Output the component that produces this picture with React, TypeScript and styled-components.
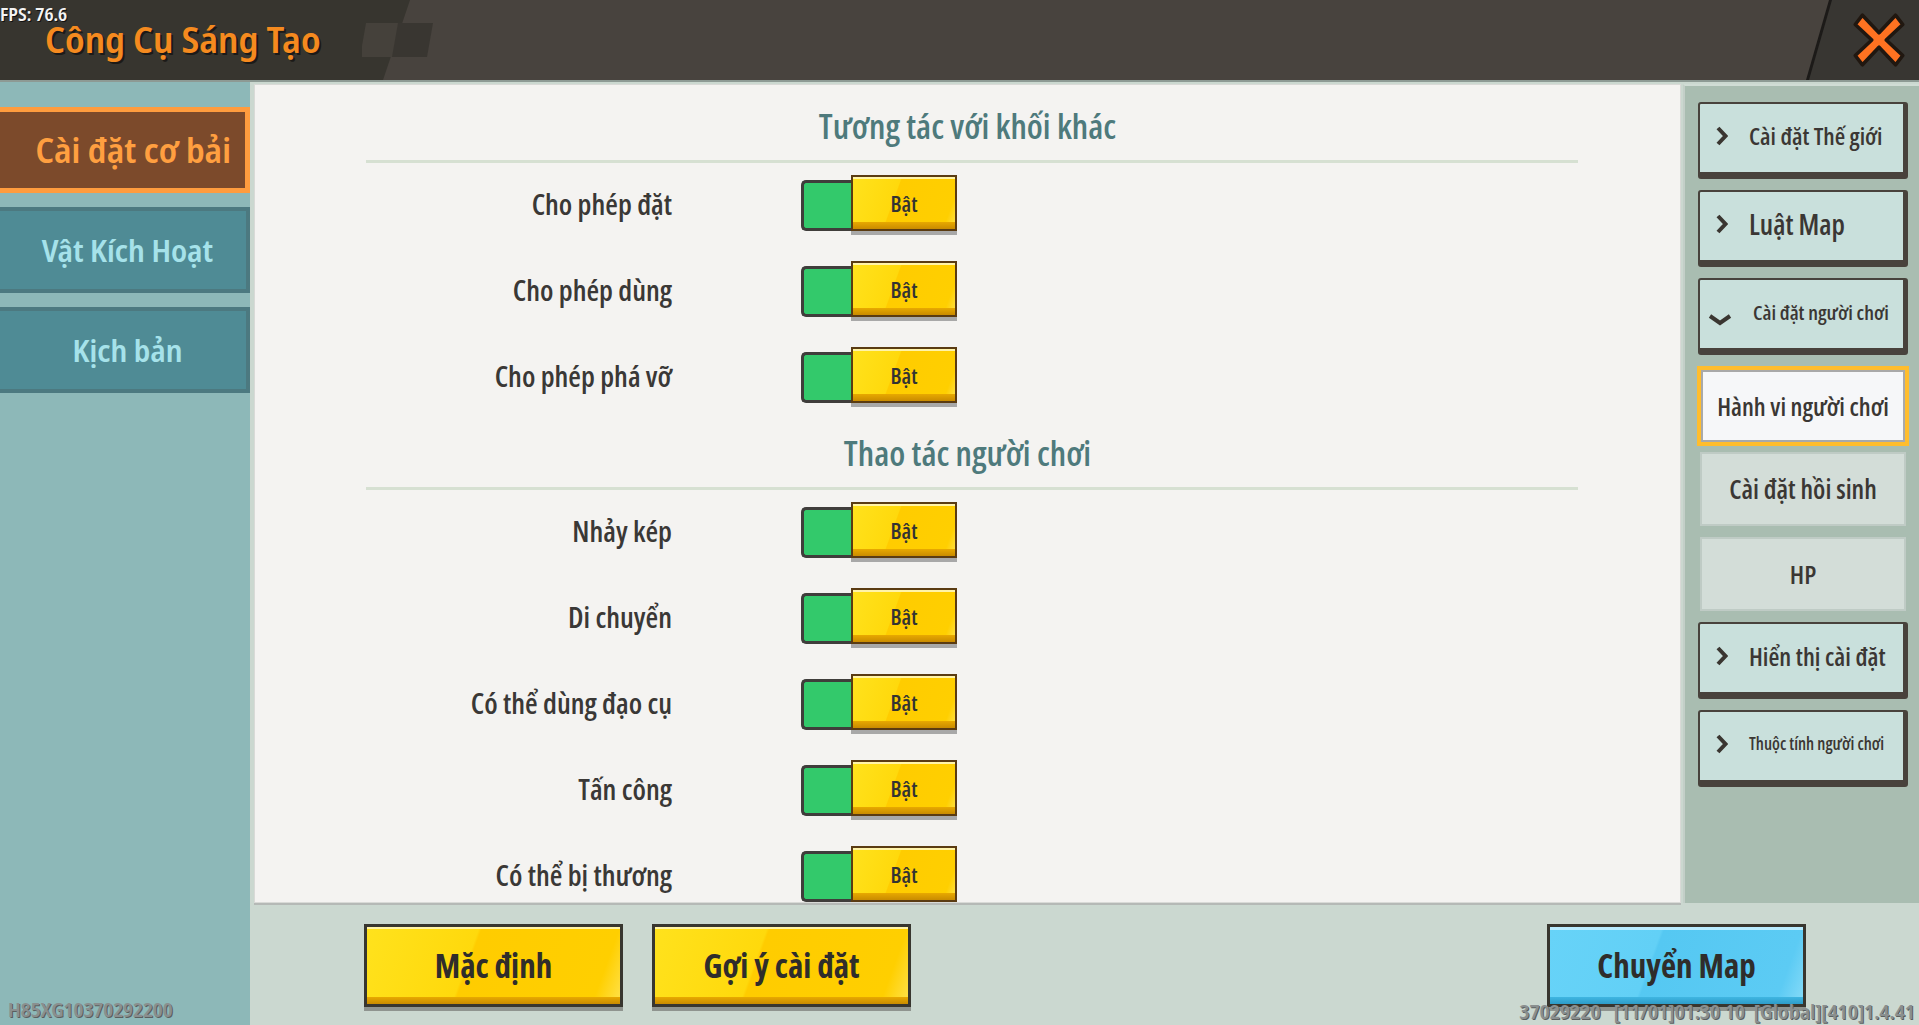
import React from "react";
import styled, { createGlobalStyle, css } from "styled-components";

const GlobalStyle = createGlobalStyle`
  html, body {
    margin: 0;
    padding: 0;
    background: #cbd8d0;
  }
  * {
    box-sizing: border-box;
  }
`;

// the game uses two narrow faces: a semi-condensed one for the header/tabs and a
// tighter one for the settings list
const SEMI = `"Noto Sans Display", "Open Sans", sans-serif`;
const COND = `"Open Sans", "Noto Sans", sans-serif`;

const Screen = styled.div`
  position: relative;
  width: 1919px;
  height: 1025px;
  overflow: hidden;
  display: grid;
  grid-template-columns: 250px 1fr;
  grid-template-rows: 82px 1fr;
  font-family: ${COND};
  font-stretch: 75%;
  background: #cbd8d0;
`;

/* ---------- header ---------- */

const Header = styled.header`
  grid-column: 1 / -1;
  display: flex;
  align-items: stretch;
  background: #48433e;
  border-bottom: 2px solid #8d9a94;
`;

const Brand = styled.div`
  width: 362px;
  display: flex;
  align-items: center;
  padding: 0 0 2px 45px;
  background: #37352f;
`;

const Title = styled.h1`
  margin: 0;
  font-family: ${SEMI};
  font-size: 36.5px;
  font-weight: 600;
  color: #f58a1f;
  text-shadow: 2px 2px 0 #1c1a17;
  white-space: nowrap;
`;

const Fps = styled.div`
  position: absolute;
  top: 2px;
  left: 0;
  font-family: ${SEMI};
  font-size: 18px;
  font-weight: 600;
  color: #f4f4f4;
  text-shadow: 1px 1px 0 #111;
`;

const Spacer = styled.div`
  flex: 1;
`;

const CloseArea = styled.div`
  position: relative;
  width: 113px;
  display: flex;
  align-items: center;
  justify-content: flex-end;
  padding-right: 12px;
  background: #1c1a18;
  clip-path: polygon(23px 0, 100% 0, 100% 100%, 0 100%);

  &::before {
    content: "";
    position: absolute;
    inset: 0;
    background: #383632;
    clip-path: polygon(26px 0, 100% 0, 100% 100%, 3px 100%);
  }

  svg {
    position: relative;
  }
`;

/* ---------- left sidebar ---------- */

const Sidebar = styled.nav`
  display: flex;
  flex-direction: column;
  background: #8db8b8;
  padding-top: 25px;
`;

const Tab = styled.div<{ $active?: boolean }>`
  height: 86px;
  margin-bottom: 14px;
  display: flex;
  align-items: center;
  justify-content: center;
  padding-left: 9px;
  background: #4f8b95;
  border: 4px solid #4c7980;
  border-left: none;
  font-family: ${SEMI};
  color: #a6e2ea;
  font-size: 30px;
  font-weight: 600;
  white-space: nowrap;

  ${(p) =>
    p.$active &&
    css`
      background: #7c4a2b;
      border: 5px solid #ff9c3e;
      border-left: none;
      color: #ff9f40;
      font-size: 34px;
      justify-content: flex-end;
      padding-right: 14px;
    `}
`;

const DebugId = styled.div`
  margin-top: auto;
  padding: 0 0 2px 8px;
  font-family: ${SEMI};
  font-size: 19.6px;
  font-weight: 600;
  color: #8a8f8f;
  text-shadow: 1px 1px 0 #5a5f5f;
`;

/* ---------- main ---------- */

const Main = styled.main`
  position: relative;
  display: grid;
  grid-template-columns: 1fr 236px;
  grid-template-rows: 819px 1fr;
  column-gap: 2px;
  padding: 2px 0 0 4px;
  background: #cbd8d0;
`;

const Panel = styled.section`
  overflow: hidden;
  background: #f4f3f1;
  border: 1px solid #d9dad7;
  box-shadow: 0 2px 0 #b5b9b6;
  padding-top: 9px;
`;

const SectionTitle = styled.h2`
  margin: 12px 0 14px;
  height: 40px;
  line-height: 40px;
  text-align: center;
  font-size: 34.5px;
  font-weight: 600;
  color: #4e7a7c;
`;

const Divider = styled.div`
  height: 3px;
  margin: 0 102px 0 111px;
  background: #d6e0d2;
`;

const Row = styled.div`
  height: 86px;
  display: flex;
  align-items: center;
  padding-bottom: 6px;
`;

const Label = styled.div`
  width: 417px;
  text-align: right;
  font-size: 29px;
  font-weight: 600;
  color: #3a3836;
`;

const Toggle = styled.div`
  display: flex;
  align-items: flex-end;
  margin-left: 129px;
`;

const Track = styled.div`
  width: 50px;
  height: 51px;
  background: #33c96b;
  border: 3px solid #3f3d3b;
  border-right: none;
  border-radius: 5px 0 0 5px;
`;

const yellowFace = css`
  background:
    linear-gradient(
      180deg,
      #fff3a8 0,
      #fff3a8 2px,
      transparent 2px,
      transparent calc(100% - 7px),
      #e8a900 calc(100% - 7px),
      #c98b00 100%
    ),
    linear-gradient(110deg, #ffe21d 0%, #ffd90c 40%, #ffcc00 41%, #ffcf00 90%, #ffe14a 100%);
`;

const Knob = styled.div`
  width: 106px;
  height: 56px;
  display: flex;
  align-items: center;
  justify-content: center;
  border: 2px solid #5a3b12;
  ${yellowFace}
  box-shadow: 0 4px 0 #a8a8a8;
  font-size: 22px;
  font-weight: 600;
  color: #333;
`;

/* ---------- right panel ---------- */

const SidePanel = styled.aside`
  display: flex;
  flex-direction: column;
  gap: 11px;
  padding: 16px 11px 0 13px;
  background: #a9bdb1;
  border-top: 2px solid #d0dcd5;
  border-left: 2px solid #c3cfc8;
`;

const GroupButton = styled.div<{ $size: number }>`
  height: 77px;
  display: flex;
  align-items: center;
  gap: 21px;
  padding: 0 0 5px 16px;
  background: #c9e0dc;
  border: 2px solid #48423c;
  border-width: 2px 5px 7px 2px;
  border-radius: 3px;
  font-size: ${(p) => p.$size}px;
  font-weight: 600;
  color: #3b3734;
  white-space: nowrap;

  svg {
    flex-shrink: 0;
  }
`;

const SubButton = styled.div<{ $size: number; $selected?: boolean }>`
  height: 74px;
  margin: 0 2px;
  display: flex;
  align-items: center;
  justify-content: center;
  background: #d3ddd8;
  border: 2px solid #bfcbc5;
  font-size: ${(p) => p.$size}px;
  font-weight: 600;
  color: #3b3734;
  white-space: nowrap;

  ${(p) =>
    p.$selected &&
    css`
      height: 80px;
      margin: 0 -1px -5px;
      background: #f6f7f9;
      border: 4px solid #ffbd2d;
      box-shadow: inset 0 0 0 2px #a9a9a9;
    `}
`;

/* ---------- bottom bar ---------- */

const BottomBar = styled.div`
  grid-column: 1 / -1;
  display: flex;
  align-items: flex-start;
  gap: 29px;
  padding: 21px 113px 0 110px;
`;

const BigButton = styled.div<{ $blue?: boolean }>`
  width: 259px;
  height: 83px;
  display: flex;
  align-items: center;
  justify-content: center;
  border: 3px solid #38362f;
  ${yellowFace}
  box-shadow: 0 4px 0 #8f948f;
  font-size: 33px;
  font-weight: 700;
  color: #2f2d2b;

  ${(p) =>
    p.$blue &&
    css`
      margin-left: auto;
      background:
        linear-gradient(
          180deg,
          #b9ecff 0,
          #b9ecff 3px,
          transparent 3px,
          transparent calc(100% - 7px),
          #3fb6e2 calc(100% - 7px),
          #2e9cc8 100%
        ),
        linear-gradient(110deg, #67d3f8 0%, #62d0f6 40%, #55c8f2 41%, #5ccbf4 90%, #86dbf8 100%);
    `}
`;

const BuildInfo = styled.div`
  position: absolute;
  right: 4px;
  bottom: 0;
  font-family: ${SEMI};
  font-size: 20.1px;
  font-weight: 600;
  color: #8a8f8f;
  text-shadow: 1px 1px 0 #5a5f5f;
  white-space: pre;
`;

/* ---------- icons ---------- */

const CloseIcon = () => (
  <svg width="56" height="62" viewBox="0 0 54 60">
    <polygon
      points="4,15 11,6 27,23 43,6 50,15 34,30 50,45 43,54 27,37 11,54 4,45 20,30"
      fill="#ff7221"
      stroke="#201710"
      strokeWidth="3.5"
      strokeLinejoin="round"
    />
  </svg>
);

const HeaderDeco = () => (
  <svg width="100" height="80" viewBox="0 0 100 80">
    <polygon points="0,0 48,0 21,80 0,80" fill="#37352f" />
    <polygon points="4,23 38,23 32,57 -2,57" fill="#45413b" />
    <polygon points="36,23 71,23 65,57 30,57" fill="#393631" />
  </svg>
);

const ChevronRight = () => (
  <svg width="12" height="20" viewBox="0 0 12 20">
    <polyline points="2,2 9.5,10 2,18" fill="none" stroke="#3a3631" strokeWidth="4" />
  </svg>
);

const ChevronDown = () => (
  <svg width="24" height="14" viewBox="0 0 24 14" style={{ marginLeft: -8, marginTop: 16 }}>
    <polyline points="2,3 12,10 22,3" fill="none" stroke="#3a3631" strokeWidth="4" />
  </svg>
);

/* ---------- data ---------- */

const sections = [
  { title: "Tương tác với khối khác", rows: ["Cho phép đặt", "Cho phép dùng", "Cho phép phá vỡ"] },
  {
    title: "Thao tác người chơi",
    rows: ["Nhảy kép", "Di chuyển", "Có thể dùng đạo cụ", "Tấn công", "Có thể bị thương"],
  },
];

const App: React.FC = () => {
  return (
    <>
      <GlobalStyle />
      <Screen>
        <Header>
          <Brand>
            <Title>Công Cụ Sáng Tạo</Title>
          </Brand>
          <HeaderDeco />
          <Spacer />
          <CloseArea>
            <CloseIcon />
          </CloseArea>
        </Header>
        <Fps>FPS: 76.6</Fps>

        <Sidebar>
          <Tab $active>Cài đặt cơ bải</Tab>
          <Tab>Vật Kích Hoạt</Tab>
          <Tab>Kịch bản</Tab>
          <DebugId>H85XG10370292200</DebugId>
        </Sidebar>

        <Main>
          <Panel>
            {sections.map((section) => (
              <div key={section.title}>
                <SectionTitle>{section.title}</SectionTitle>
                <Divider />
                {section.rows.map((row) => (
                  <Row key={row}>
                    <Label>{row}</Label>
                    <Toggle>
                      <Track />
                      <Knob>Bật</Knob>
                    </Toggle>
                  </Row>
                ))}
              </div>
            ))}
          </Panel>

          <SidePanel>
            <GroupButton $size={24}>
              <ChevronRight />
              Cài đặt Thế giới
            </GroupButton>
            <GroupButton $size={28}>
              <ChevronRight />
              Luật Map
            </GroupButton>
            <GroupButton $size={20.5}>
              <ChevronDown />
              Cài đặt người chơi
            </GroupButton>
            <SubButton $size={25} $selected>
              Hành vi người chơi
            </SubButton>
            <SubButton $size={26.5}>Cài đặt hồi sinh</SubButton>
            <SubButton $size={26}>HP</SubButton>
            <GroupButton $size={25}>
              <ChevronRight />
              Hiển thị cài đặt
            </GroupButton>
            <GroupButton $size={17}>
              <ChevronRight />
              Thuộc tính người chơi
            </GroupButton>
          </SidePanel>

          <BottomBar>
            <BigButton>Mặc định</BigButton>
            <BigButton>Gợi ý cài đặt</BigButton>
            <BigButton $blue>Chuyển Map</BigButton>
          </BottomBar>
          <BuildInfo>{"37029220   [11/01]01:30 10  [Global][410]1.4.41"}</BuildInfo>
        </Main>
      </Screen>
    </>
  );
};

export default App;
